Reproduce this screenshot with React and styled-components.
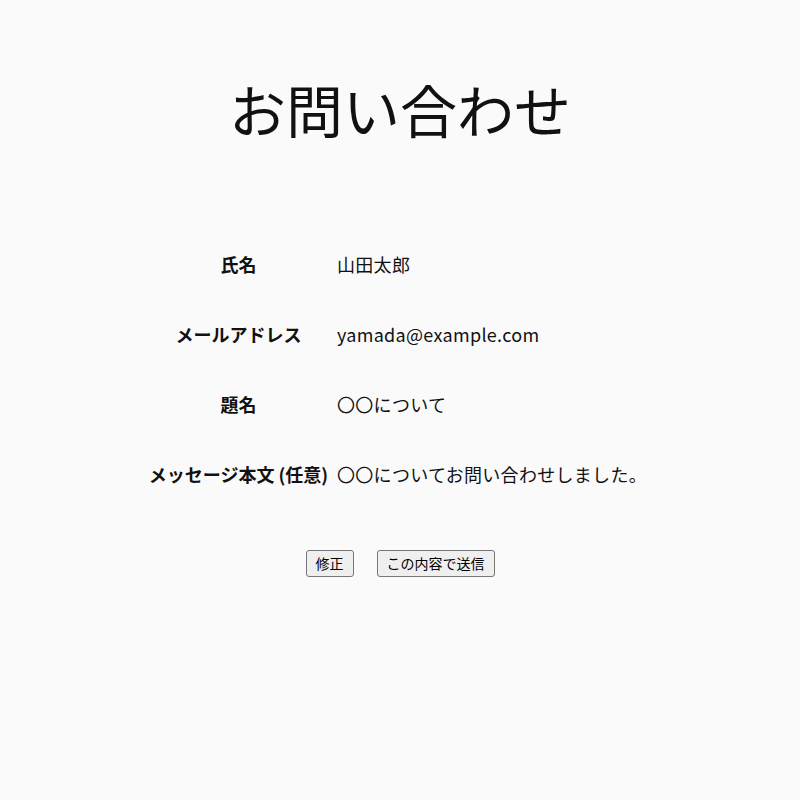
import React from 'react'
import styled, { createGlobalStyle } from 'styled-components'

const GlobalStyle = createGlobalStyle`
  body {
    margin: 0;
    background: #fafafa;
    color: #111;
    font-family: "Noto Sans CJK JP", "Noto Sans", sans-serif;
  }
`

const Page = styled.div`
  display: flex;
  flex-direction: column;
  align-items: center;
  padding-top: 70px;
`

const Title = styled.h1`
  margin: 0 0 83px;
  font-size: 57px;
  font-weight: 400;
  line-height: 76px;
`

const Table = styled.table`
  border-collapse: collapse;
  font-size: 18px;
  margin-right: 8px;
`

const Head = styled.th`
  padding: 0 5px 0 0;
  width: 187px;
  height: 70px;
  text-align: center;
  font-weight: 700;
  white-space: nowrap;
`

const Cell = styled.td`
  padding: 0;
  height: 70px;
  text-align: left;
  white-space: nowrap;
  letter-spacing: 0.3px;
`

const Buttons = styled.div`
  display: flex;
  gap: 23px;
  margin-top: 41px;
`

const Button = styled.button`
  font-family: "Noto Sans CJK JP", sans-serif;
  font-size: 14px;
  line-height: 21px;
  padding: 2px 9px;
  background: #efefef;
  border: 1px solid #767676;
  border-radius: 3px;
  color: #000;
`

const rows = [
  ['氏名', '山田太郎'],
  ['メールアドレス', 'yamada@example.com'],
  ['題名', '〇〇について'],
  ['メッセージ本文 (任意)', '〇〇についてお問い合わせしました。'],
]

export default function App() {
  return (
    <>
      <GlobalStyle />
      <Page>
        <Title>お問い合わせ</Title>
        <Table>
          <tbody>
            {rows.map(([k, v]) => (
              <tr key={k}>
                <Head>{k}</Head>
                <Cell>{v}</Cell>
              </tr>
            ))}
          </tbody>
        </Table>
        <Buttons>
          <Button>修正</Button>
          <Button>この内容で送信</Button>
        </Buttons>
      </Page>
    </>
  )
}
